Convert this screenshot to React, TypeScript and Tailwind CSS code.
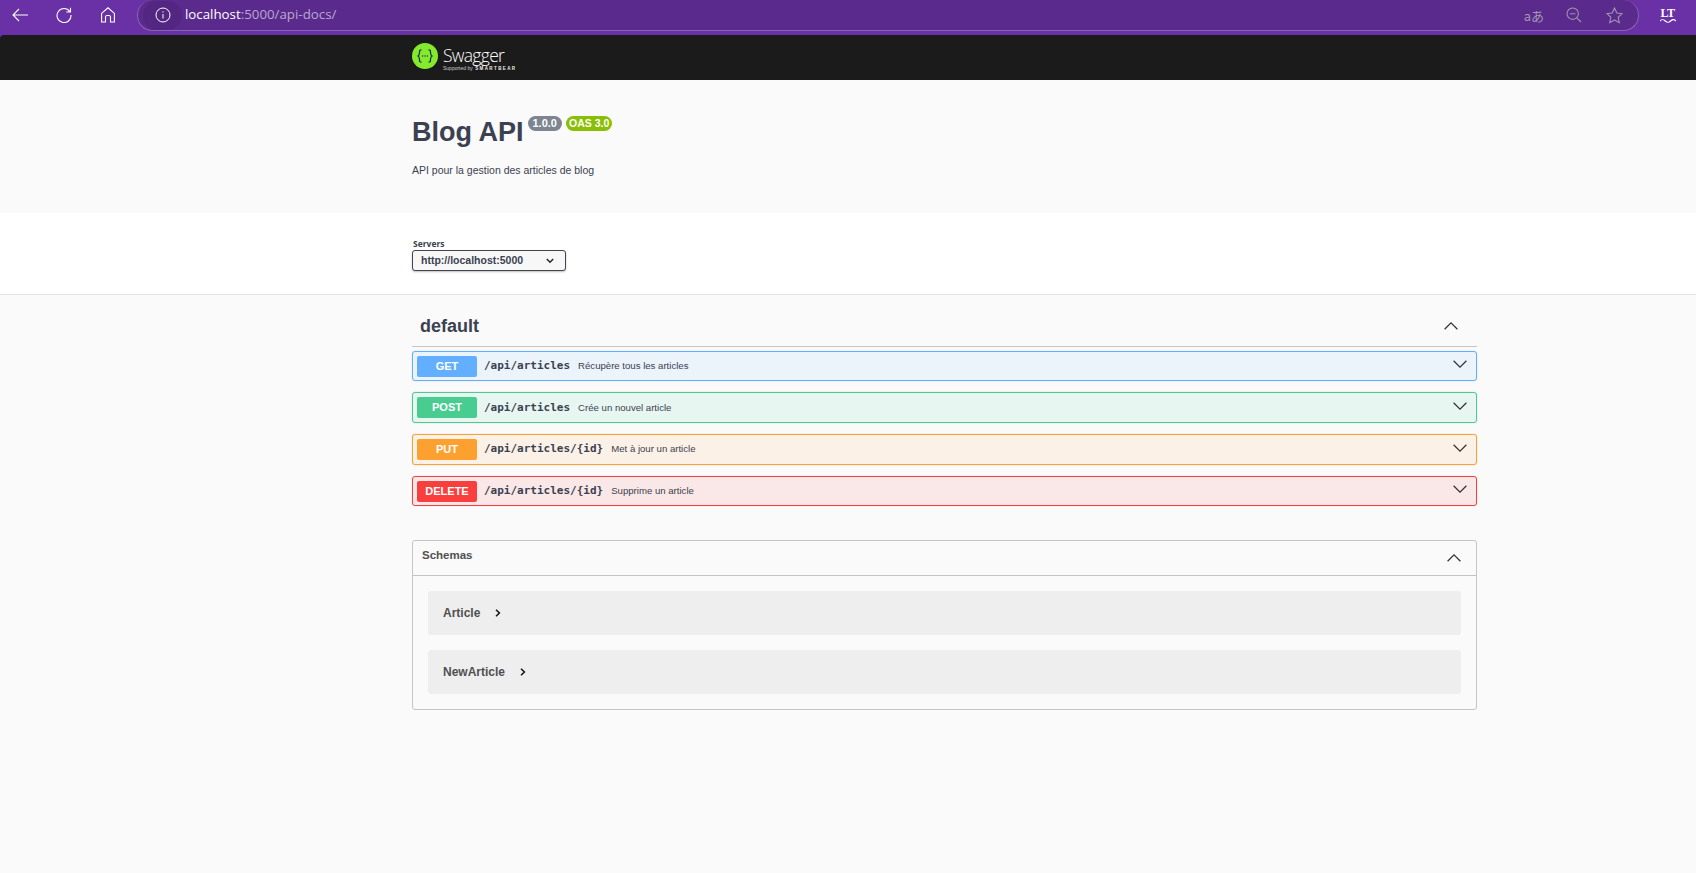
import React from "react";

const sans = "font-['Liberation_Sans',Arial,sans-serif]";

function Chevron({ up = false, className = "" }: { up?: boolean; className?: string }) {
  return (
    <svg width="14" height="8" viewBox="0 0 14 8" className={className} fill="none" stroke="#303030" strokeWidth="1.2">
      {up ? <path d="M.6 7.200 7 .9l6.400 6.300" /> : <path d="M.6.8 7 7.100 13.400.8" />}
    </svg>
  );
}

function Small({ className = "" }: { className?: string }) {
  return (
    <svg width="6" height="8" viewBox="0 0 6 8" className={className} fill="none" stroke="#111" strokeWidth="1.500">
      <path d="M1 .8 4.400 4 1 7.200" />
    </svg>
  );
}

const rows = [
  { m: "GET", p: "/api/articles", d: "Récupère tous les articles", box: "h-[30px] border-[#61affe] bg-[#ebf3fb]", tag: "bg-[#61affe]", mb: "mb-[11px]", nudge: "" },
  { m: "POST", p: "/api/articles", d: "Crée un nouvel article", box: "h-[31px] border-[#49cc90] bg-[#e7f6f0]", tag: "bg-[#49cc90]", mb: "mb-[11px]", nudge: "mt-[1px]" },
  { m: "PUT", p: "/api/articles/{id}", d: "Met à jour un article", box: "h-[31px] border-[#fca130] bg-[#fcf1e6]", tag: "bg-[#fca130]", mb: "mb-[11px]", nudge: "" },
  { m: "DELETE", p: "/api/articles/{id}", d: "Supprime un article", box: "h-[30px] border-[#f93e3e] bg-[#fae7e7]", tag: "bg-[#f93e3e]", mb: "", nudge: "" },
];

export default function App() {
  return (
    <div className={`${sans} h-[873px] w-[1696px] overflow-hidden bg-[#fafafa] text-[#3b4151]`}>
      {/* browser toolbar */}
      <div className="flex h-[35px] items-start bg-[#6a30a5]">
        <div className="flex h-[30px] w-[137px] shrink-0 items-center text-white">
          <svg width="16" height="14" viewBox="0 0 16 14" className="ml-[12px]" fill="none" stroke="#fff" strokeWidth="1.100">
            <path d="M16 7H1M7 1 1 7l6 6" />
          </svg>
          <svg width="16" height="16" viewBox="0 0 16 16" className="ml-[28px]" fill="none" stroke="#fff" strokeWidth="1.100">
            <path d="M13.800 4.600A7 7 0 1 0 15 8M14.500.8v4.200h-4.200" />
          </svg>
          <svg width="14" height="16" viewBox="0 0 14 16" className="ml-[29px]" fill="none" stroke="#fff" strokeWidth="1.100">
            <path d="M.6 6.400 7 .8l6.400 5.600V15H9.500V10a1.500 1.500 0 0 0-1.500-1.500H6A1.500 1.500 0 0 0 4.500 10v5H.6Z" />
          </svg>
        </div>
        <div className="flex h-[31px] w-[1502px] items-center rounded-full border-x border-b border-[#8a63b5] bg-[#5a2a8c]">
          <div className="ml-[5px] flex h-[29px] w-[39px] items-center justify-center rounded-full bg-[#532781]">
            <svg width="16" height="16" viewBox="0 0 16 16" fill="none" stroke="#fff" strokeWidth="1">
              <circle cx="8" cy="8" r="7" />
              <path d="M8 7v4.500M8 4.300v1.200" />
            </svg>
          </div>
          <span className="ml-[3px] font-['Open_Sans',sans-serif] text-[13.300px] text-white">
            localhost<span className="text-[#b9a8cf]">:5000/api-docs/</span>
          </span>
          <div className="ml-auto flex items-center">
            <span className="font-['Noto_Sans_CJK_JP','Noto_Sans',sans-serif] text-[13px] leading-none text-[#a497b4]">aあ</span>
            <svg width="16" height="16" viewBox="0 0 16 16" className="ml-[22px]" fill="none" stroke="#a094ae" strokeWidth="1.100">
              <circle cx="6.700" cy="6.700" r="5.700" />
              <path d="M10.800 10.800 15 15M4 6.700h5.400" />
            </svg>
            <svg width="17" height="17" viewBox="0 0 17 17" className="ml-[24px] mr-[15px]" fill="none" stroke="#a094ae" strokeWidth="1.100">
              <path d="m8.500 1 2.300 5 5.400.6-4 3.700 1.100 5.400-4.800-2.700-4.800 2.700 1.100-5.400-4-3.700 5.400-.6Z" />
            </svg>
          </div>
        </div>
        <div className="flex h-[30px] w-[57px] items-center justify-center">
          <div className="flex flex-col items-center text-white">
            <span className="font-['Liberation_Serif',serif] text-[12px] font-bold leading-[10px] tracking-[-0.500px]">LT</span>
            <svg width="16" height="4" viewBox="0 0 16 4" className="mt-[1px]" fill="none" stroke="#fff" strokeWidth="1.200">
              <path d="M0 2c2-2 3-2 5.300 0s3.300 2 5.300 0 3.400-2 5.400 0" />
            </svg>
          </div>
        </div>
      </div>

      {/* swagger bar */}
      <div className="bg-[#6a30a5]">
        <div className="flex h-[45px] items-center rounded-tl-[4px] bg-[#1b1b1b] pl-[412px]">
          <svg width="26" height="26" viewBox="0 0 26 26" className="mt-[-3px]">
            <circle cx="13" cy="13" r="13" fill="#85ea2d" />
            <path d="M9.500 6.800c-2.200 0-2 1.400-2 2.700 0 1.800-.4 2.900-1.500 3.500 1.100.6 1.500 1.700 1.500 3.500 0 1.300-.2 2.700 2 2.700M16.500 6.800c2.200 0 2 1.400 2 2.700 0 1.800.4 2.900 1.500 3.500-1.100.6-1.500 1.700-1.500 3.500 0 1.300.2 2.700-2 2.700" fill="none" stroke="#173647" strokeWidth="1.300" />
            <path d="M10.200 13h1M12.500 13h1M14.800 13h1" stroke="#173647" strokeWidth="1.400" />
          </svg>
          <div className="ml-[5px] mt-[1px] flex flex-col text-white">
            <span className="font-['Open_Sans',sans-serif] text-[17.500px] font-light leading-[20px] tracking-[-0.7px]">Swagger</span>
            <span className="mt-[1px] whitespace-nowrap text-[5px] leading-[5px] text-[#ccc]">
              Supported by <span className="ml-[1px] text-[4.500px] font-bold tracking-[1.400px] text-[#eee]">SMARTBEAR</span>
            </span>
          </div>
        </div>
      </div>

      {/* info */}
      <div className="h-[133px] bg-[#fafafa] pl-[412px] pt-[36px]">
        <div className="flex items-start">
          <h1 className="mt-[4px] text-[27px] font-bold leading-[25px]">Blog API</h1>
          <span className="ml-[4px] rounded-[8px] bg-[#7d8492] px-[5px] text-[11px] font-bold leading-[15px] text-white">1.0.0</span>
          <span className="ml-[4px] rounded-[8px] bg-[#89bf04] px-[3px] text-[10.500px] font-bold leading-[15px] text-white">OAS 3.0</span>
        </div>
        <p className="mt-[18px] text-[10.500px] leading-[14px]">API pour la gestion des articles de blog</p>
      </div>

      {/* servers */}
      <div className="h-[82px] border-b border-[#e3e3e3] bg-white pl-[412px] pt-[26px]">
        <div className="pl-[1px] font-['Open_Sans',sans-serif] text-[8.500px] font-bold leading-[10px]">Servers</div>
        <div className="mt-[1px] flex h-[21px] w-[154px] items-center justify-between rounded-[3px] border border-[#41444e] bg-[#f7f7f7] pl-[8px] pr-[11px] shadow-[0_1px_2px_rgba(0,0,0,0.25)]">
          <span className="text-[10.500px] font-bold">http://localhost:5000</span>
          <svg width="8" height="6" viewBox="0 0 8 6" fill="none" stroke="#222" strokeWidth="1.400"><path d="M.8 1 4 4.300 7.200 1" /></svg>
        </div>
      </div>

      {/* operations */}
      <div className="ml-[412px] w-[1065px]">
        <div className="flex h-[52px] items-center justify-between border-b border-[#c4c4c4] pl-[8px] pr-[19px] pt-[11px]">
          <h3 className="text-[18px] font-bold">default</h3>
          <Chevron up />
        </div>
        <div className="mt-[4px]">
          {rows.map((r) => (
            <div key={r.m} className={`flex items-center rounded-[3px] border ${r.box} ${r.mb} pl-[4px] pr-[9px] shadow-[0_0_2px_rgba(0,0,0,0.12)]`}>
              <span className={`flex h-[21px] w-[60px] items-center justify-center rounded-[2px] text-[11px] font-bold text-white ${r.tag}`}>{r.m}</span>
              <span className={`ml-[7px] font-['DejaVu_Sans_Mono',monospace] text-[11px] font-semibold text-[#3b4151] ${r.nudge}`}>{r.p}</span>
              <span className={`ml-[8px] text-[9.600px] ${r.nudge}`}>{r.d}</span>
              <Chevron className="mb-[4px] ml-auto" />
            </div>
          ))}
        </div>

        <div className="mt-[34px] rounded-[3px] border border-[#c4c4c4]">
          <div className="flex h-[35px] items-center justify-between border-b border-[#c4c4c4] pl-[9px] pr-[15px]">
            <h4 className="mb-[4px] text-[11.500px] font-bold text-[#505050]">Schemas</h4>
            <Chevron up />
          </div>
          <div className="p-[15px]">
            <div className="flex h-[44px] items-center rounded-[3px] bg-[#eeeeee] pl-[15px]">
              <span className="text-[12px] font-bold text-[#505050]">Article</span>
              <Small className="ml-[15px]" />
            </div>
            <div className="mt-[15px] flex h-[44px] items-center rounded-[3px] bg-[#eeeeee] pl-[15px]">
              <span className="text-[12px] font-bold text-[#505050]">NewArticle</span>
              <Small className="ml-[15px]" />
            </div>
          </div>
        </div>
      </div>
    </div>
  );
}
